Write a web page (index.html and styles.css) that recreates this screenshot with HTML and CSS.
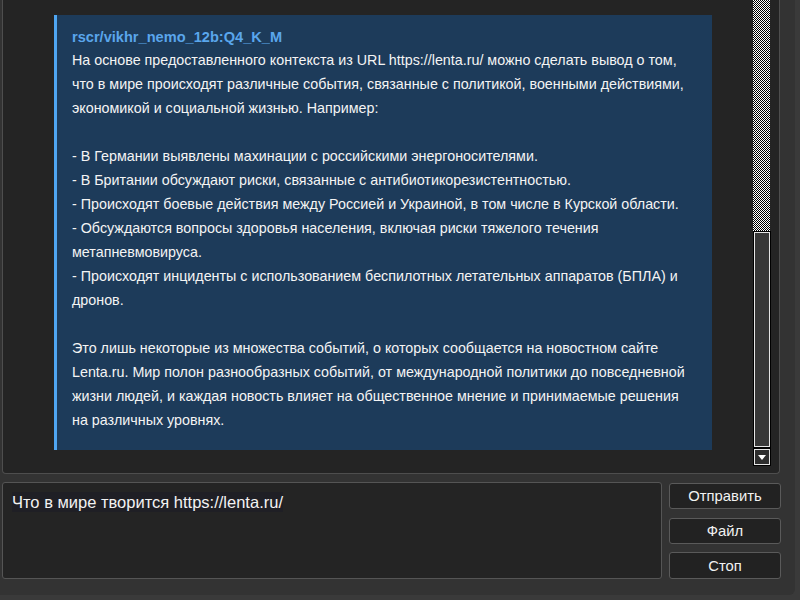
FILE: index.html
```html
<!DOCTYPE html>
<html lang="ru">
<head>
<meta charset="utf-8">
<link rel="stylesheet" href="styles.css">
</head>
<body>
<div class="app">
  <div class="chat">
    <div class="messages">
      <div class="msg">
        <div class="author">rscr/vikhr_nemo_12b:Q4_K_M</div>
        <div class="body">На основе предоставленного контекста из URL https://lenta.ru/ можно сделать вывод о том,
что в мире происходят различные события, связанные с политикой, военными действиями,
экономикой и социальной жизнью. Например:

- В Германии выявлены махинации с российскими энергоносителями.
- В Британии обсуждают риски, связанные с антибиотикорезистентностью.
- Происходят боевые действия между Россией и Украиной, в том числе в Курской области.
- Обсуждаются вопросы здоровья населения, включая риски тяжелого течения
метапневмовируса.
- Происходят инциденты с использованием беспилотных летательных аппаратов (БПЛА) и
дронов.

Это лишь некоторые из множества событий, о которых сообщается на новостном сайте
Lenta.ru. Мир полон разнообразных событий, от международной политики до повседневной
жизни людей, и каждая новость влияет на общественное мнение и принимаемые решения
на различных уровнях.</div>
      </div>
    </div>
    <div class="scrollbar">
      <div class="track"></div>
      <div class="thumb"></div>
      <div class="arrow">
        <svg width="8" height="5" viewBox="0 0 8 5"><path d="M0 0H8L4 5Z" fill="#fff"/></svg>
      </div>
    </div>
  </div>
  <div class="composer">
    <div class="input"><span class="input-text">Что в мире творится https://lenta.ru/</span></div>
    <div class="buttons">
      <button class="btn">Отправить</button>
      <button class="btn">Файл</button>
      <button class="btn">Стоп</button>
    </div>
  </div>
</div>
</body>
</html>
```
FILE: styles.css
```css
html, body {
  margin: 0;
  padding: 0;
}
body {
  background: #3a3a3a;
  font-family: "Liberation Sans", Arial, sans-serif;
  width: 800px;
  height: 600px;
  overflow: hidden;
}
.app {
  width: 795px;
  height: 595px;
  background: #333333;
  border-radius: 0 0 6px 0;
  display: flex;
  flex-direction: column;
}
.chat {
  margin-left: 2px;
  width: 776px;
  height: 473px;
  background: #242424;
  border: 1px solid #4e4e4e;
  border-top: none;
  border-radius: 0 0 4px 4px;
  display: flex;
}
.messages {
  flex: 1;
  padding: 15px 0 0 51px;
}
.msg {
  width: 640px;
  height: 409px;
  background: #1d3b5a;
  border-left: 3px solid #4fa6f2;
  padding: 12px 0 14px 15px;
  box-sizing: content-box;
}
.author {
  font-size: 14.6px;
  font-weight: bold;
  color: #5aa6ec;
  line-height: 21px;
}
.body {
  font-size: 14.3px;
  line-height: 24px;
  color: #f4f4f4;
  white-space: pre;
}
.scrollbar {
  width: 17px;
  margin-right: 9px;
  display: flex;
  flex-direction: column;
}
.track {
  height: 231px;
  background: repeating-conic-gradient(#000 0 25%, #fff 0 50%) 0 0 / 2px 2px;
}
.thumb {
  height: 213px;
  width: 14px;
  background: #383838;
  border: 1px solid #e6e6e6;
  outline: 1px solid #000;
  margin: 1px 0 0 1px;
}
.arrow {
  margin: 2px 0 0 1px;
  width: 14px;
  height: 14px;
  background: #2e2e2e;
  border: 1px solid #e6e6e6;
  outline: 1px solid #000;
  display: flex;
  align-items: center;
  justify-content: center;
}
.arrow svg {
  display: block;
}
.composer {
  margin-top: 8px;
  display: flex;
  gap: 7px;
  padding-left: 2px;
}
.input {
  height: 95px;
  background: #242424;
  border: 1px solid #555;
  border-radius: 3px;
  padding: 0 0 0 9px;
  box-sizing: content-box;
  width: 649px;
}
.input-text {
  display: inline-block;
  margin-top: 9px;
  font-size: 16.5px;
  line-height: 20px;
  color: #f2f2f2;
  background: #1f1f25;
}
.buttons {
  display: flex;
  flex-direction: column;
  gap: 9px;
  padding-top: 1px;
}
.btn {
  width: 112px;
  height: 26px;
  margin: 0;
  padding: 0;
  background: #222222;
  border: 1px solid #5a5a5a;
  border-radius: 3px;
  color: #f2f2f2;
  font-family: "Liberation Sans", Arial, sans-serif;
  font-size: 14.8px;
}
.btn:last-child {
  margin-top: -1px;
  height: 27px;
}
```
